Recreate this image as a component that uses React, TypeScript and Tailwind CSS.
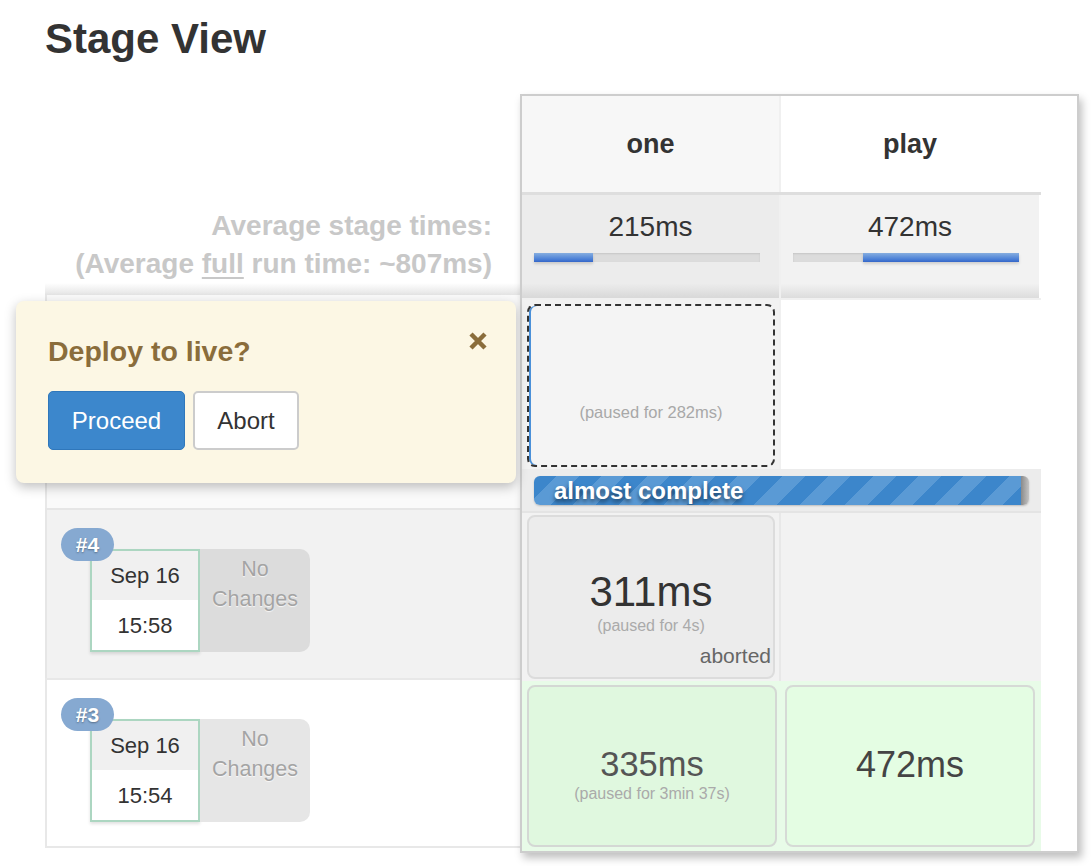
import React from 'react'

const font = { fontFamily: '"Liberation Sans", Arial, sans-serif' }

function AvgCell({ time, start, width, bg }: { time: string; start: string; width: string; bg: string }) {
  return (
    <div className={`h-[103px] flex flex-col pt-[17px] ${bg}`}>
      <div className="text-center text-[28px] leading-[30px] text-[#333]">{time}</div>
      <div className="mt-[11px] ml-[12px] w-[226px] h-[9px] bg-[#dcdcdc] shadow-[inset_0_1px_2px_rgba(0,0,0,0.1)] relative">
        <div
          className="absolute top-0 h-[9px] bg-[linear-gradient(to_bottom,#86aee0,#4a7fd6_70%,#3566c8)] shadow-[0_2px_3px_rgba(0,0,0,0.15)]"
          style={{ left: start, width }}
        />
      </div>
    </div>
  )
}

function BuildInfo({ num, date, time, changesBg }: { num: string; date: string; time: string; changesBg: string }) {
  return (
    <div className="relative pt-[39px] pl-[43px] flex">
      <div className="w-[110px] h-[103px] border-2 border-[#acd6c1] flex flex-col shadow-[0_2px_3px_rgba(0,0,0,0.12)] bg-white">
        <div className="h-[49px] bg-[#f0f0f0] flex items-center justify-center text-[22px] text-[#333]">{date}</div>
        <div className="flex-1 flex items-center justify-center text-[22px] text-[#333]">{time}</div>
      </div>
      <div className={`w-[110px] h-[103px] rounded-r-[10px] ${changesBg} text-[21.5px] leading-[30px] text-[#a4a4a4] text-center pt-[5px] [text-shadow:0_1px_1px_rgba(255,255,255,0.8)]`}>
        No
        <br />
        Changes
      </div>
      <div className="absolute top-[18px] left-[14px] w-[53px] h-[33px] rounded-full bg-[#86a9d1] text-white font-bold text-[21px] flex items-center justify-center [text-shadow:0_1px_2px_rgba(0,0,0,0.35)]">
        {num}
      </div>
    </div>
  )
}

export default function App() {
  return (
    <div className="relative w-[1092px] h-[866px] bg-white" style={font}>
      <h1 className="pl-[45px] pt-[18px] text-[42px] leading-[42px] font-bold text-[#333]">Stage View</h1>

      <div className="flex pl-[45px] mt-[34px]">
        {/* left column */}
        <div className="w-[475px] flex flex-col">
          <div className="h-[201px] flex flex-col justify-end items-end pr-[28px] pb-[12px] text-[28px] leading-[38px] font-bold text-[#c8c8c8] bg-[linear-gradient(to_bottom,#fff_calc(100%-12px),#e4e4e4)]">
            <div>Average stage times:</div>
            <div>
              (Average <span className="underline underline-offset-4">full</span> run time: ~807ms)
            </div>
          </div>
          <div className="h-[213px] bg-[#fafafa] border-l-2 border-[#e8e8e8]" />
          <div className="h-[170px] bg-[#f2f2f2] border-l-2 border-t-2 border-[#e6e6e6]">
            <BuildInfo num="#4" date="Sep 16" time="15:58" changesBg="bg-[#dcdcdc]" />
          </div>
          <div className="h-[170px] bg-white border-2 border-r-0 border-[#e8e8e8]">
            <BuildInfo num="#3" date="Sep 16" time="15:54" changesBg="bg-[#e6e6e6]" />
          </div>
        </div>

        {/* stage table */}
        <div className="w-[559px] border-2 border-[#cdcdcd] shadow-[3px_5px_8px_rgba(0,0,0,0.25)] bg-white">
          <div className="flex">
            <div className="w-[519px] flex flex-col">
              {/* header */}
              <div className="flex h-[96px]">
                <div className="w-[259px] bg-[#f7f7f7] border-r-2 border-[#f0f0f0] flex items-center justify-center text-[27px] font-bold text-[#333]">
                  one
                </div>
                <div className="w-[258px] bg-white flex items-center justify-center text-[27px] font-bold text-[#333]">
                  play
                </div>
              </div>
              {/* averages */}
              <div className="flex border-t-[3px] border-[#dedede]">
                <div className="w-[259px] border-r-2 border-[#f0f0f0]">
                  <AvgCell time="215ms" start="0%" width="26%" bg="bg-[linear-gradient(to_bottom,#ececec_86%,#d8d8d8)]" />
                </div>
                <div className="w-[258px]">
                  <AvgCell time="472ms" start="31%" width="69%" bg="bg-[linear-gradient(to_bottom,#f2f2f2_86%,#dcdcdc)]" />
                </div>
              </div>
              {/* running build */}
              <div className="flex h-[171px] border-t-2 border-[#f0f0f0]">
                <div className="w-[259px] bg-[#f2f2f2] border-r-2 border-[#f0f0f0] p-[4px] pl-[5px]">
                  <div className="h-[163px] rounded-[8px] border-2 border-dashed border-[#333] bg-[#f4f4f4] shadow-[inset_2px_0_0_#4a90d9] flex items-end justify-center pb-[40px] text-[16.5px] text-[#a8a8a8]">
                    (paused for 282ms)
                  </div>
                </div>
                <div className="w-[258px] bg-white" />
              </div>
              <div className="h-[42px] bg-[#ececec] px-[12px] pt-[7px]">
                <div className="h-[29px] rounded-[6px] overflow-hidden flex shadow-[0_1px_2px_rgba(0,0,0,0.2)]">
                  <div className="flex-1 flex items-center pl-[20px] bg-[repeating-linear-gradient(135deg,#3c86cb_0px,#3c86cb_16px,#5a9ad5_16px,#5a9ad5_32px)] text-white font-bold text-[24px] leading-[26px] [text-shadow:0_3px_4px_rgba(0,0,0,0.55)]">
                    almost complete
                  </div>
                  <div className="w-[8px] bg-[linear-gradient(to_right,#8a8a8a,#c4c4c4)]" />
                </div>
              </div>
              {/* #4 */}
              <div className="flex h-[170px] border-t-2 border-[#e4e4e4] bg-[#f2f2f2]">
                <div className="w-[259px] border-r-2 border-[#e8e8e8] pt-[2px] pl-[5px] pr-[4px]">
                  <div className="relative h-[164px] rounded-[8px] border-2 border-[#dcdcdc] bg-[#ececec] flex flex-col items-center pt-[52px]">
                    <div className="text-[42px] leading-[46px] text-[#333]">311ms</div>
                    <div className="mt-[2px] text-[16px] leading-[18px] text-[#aaa]">(paused for 4s)</div>
                    <div className="absolute right-[2px] bottom-[9px] text-[21px] leading-[24px] text-[#666]">aborted</div>
                  </div>
                </div>
                <div className="w-[258px]" />
              </div>
              {/* #3 */}
              <div className="flex h-[170px] bg-[#e8fbe8]">
                <div className="w-[259px] pt-[4px] pl-[5px] pr-[4px]">
                  <div className="h-[162px] rounded-[8px] border-2 border-[#d4d8d4] bg-[#e0f8df] flex flex-col items-center pt-[57px]">
                    <div className="text-[34.5px] leading-[40px] text-[#555]">335ms</div>
                    <div className="mt-[1px] text-[16px] leading-[18px] text-[#aaa]">(paused for 3min 37s)</div>
                  </div>
                </div>
                <div className="w-[258px] pt-[4px] pl-[4px] pr-[4px]">
                  <div className="h-[162px] rounded-[8px] border-2 border-[#d6dad6] bg-[#e4fde3] flex flex-col items-center pt-[58px]">
                    <div className="text-[36px] leading-[40px] text-[#444]">472ms</div>
                  </div>
                </div>
              </div>
            </div>
            <div className="flex-1 bg-white" />
          </div>
        </div>
      </div>

      {/* input popup */}
      <div className="absolute left-[16px] top-[301px] w-[500px] h-[182px] rounded-[8px] bg-[#fcf7e4] shadow-[0_4px_12px_rgba(0,0,0,0.25)] px-[32px] pt-[33px]">
        <div className="flex justify-between items-start">
          <div className="text-[28.5px] leading-[34px] font-bold text-[#8a6d3b]">Deploy to live?</div>
          <svg width="20" height="20" viewBox="0 0 20 20" className="mt-[-3px] mr-[-4px]">
            <path d="M3 3 L17 17 M17 3 L3 17" stroke="#8a6d3b" strokeWidth="4.5" strokeLinecap="butt" />
          </svg>
        </div>
        <div className="flex gap-[8px] mt-[23px]">
          <button className="w-[137px] h-[59px] rounded-[5px] bg-[#3c87cc] border border-[#2f77bb] text-white text-[24px]">
            Proceed
          </button>
          <button className="w-[106px] h-[59px] rounded-[5px] bg-white border-2 border-[#cccccc] text-[#333] text-[24px]">
            Abort
          </button>
        </div>
      </div>
    </div>
  )
}
